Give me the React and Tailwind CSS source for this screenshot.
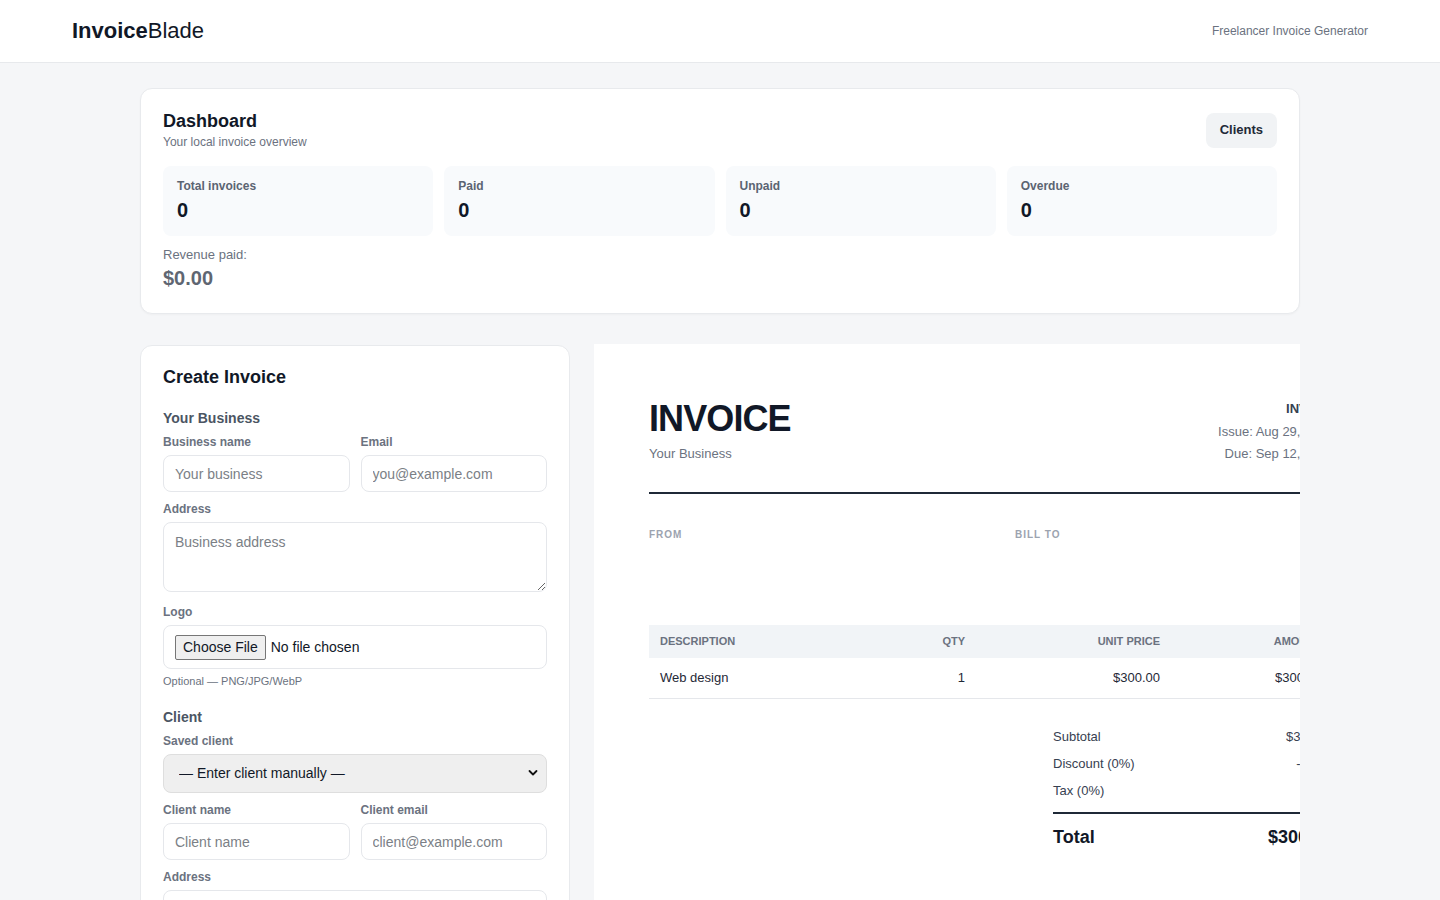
import React from "react";

function Field({ label, children, className = "" }) {
  return (
    <div className={className}>
      <div className="text-[12px] leading-[16px] font-bold text-[#6b7280] mb-[5px]">{label}</div>
      {children}
    </div>
  );
}

const inputCls =
  "block w-full h-[37px] rounded-lg border border-[#e5e7eb] bg-white px-[11px] text-[14px] text-[#111827] placeholder:text-[#7b7f86] outline-none";

function Stat({ label, value }) {
  return (
    <div className="rounded-lg bg-[#f8fafc] px-[14px] pt-[12px] pb-[12px]">
      <div className="text-[12px] leading-[16px] font-bold text-[#5b6472]">{label}</div>
      <div className="mt-[2px] text-[20px] leading-[28px] font-bold text-[#111827]">{value}</div>
    </div>
  );
}

export default function App() {
  return (
    <div className="min-h-screen bg-[#f5f6f8] font-['Liberation_Sans',Arial,sans-serif] text-[#111827]">
      <header className="h-[63px] bg-white border-b border-[#e7e9ec] px-[72px] flex items-center justify-between">
        <div className="text-[22px] leading-[28px] text-[#111827]">
          <span className="font-bold">Invoice</span>Blade
        </div>
        <div className="text-[12px] text-[#6b7280]">Freelancer Invoice Generator</div>
      </header>

      <main className="w-[1160px] mx-auto pt-[25px]">
        <section className="bg-white rounded-xl border border-[#e8eaed] shadow-[0_1px_2px_rgba(0,0,0,0.03)] px-[22px] pt-[20px] pb-[21px]">
          <div className="flex items-center justify-between">
            <div>
              <h1 className="text-[18px] leading-[24px] font-bold text-[#111827]">Dashboard</h1>
              <p className="mt-[1px] text-[12px] leading-[17px] text-[#6b7280]">Your local invoice overview</p>
            </div>
            <button className="h-[35px] px-[14px] rounded-lg bg-[#f1f3f5] text-[13px] font-bold text-[#1f2937]">
              Clients
            </button>
          </div>
          <div className="grid grid-cols-4 gap-[11px] mt-[15px]">
            <Stat label="Total invoices" value="0" />
            <Stat label="Paid" value="0" />
            <Stat label="Unpaid" value="0" />
            <Stat label="Overdue" value="0" />
          </div>
          <div className="mt-[10px] text-[13px] leading-[18px] text-[#6b7280]">Revenue paid:</div>
          <div className="text-[20px] leading-[28px] font-bold text-[#5f6672]">$0.00</div>
        </section>

        <div className="grid grid-cols-[430px_1fr] gap-6 mt-[30px] items-start">
          <section className="mt-[1px] bg-white rounded-xl border border-[#e8eaed] px-[22px] pt-[19px] pb-[24px]">
            <h2 className="text-[18px] leading-[24px] font-bold text-[#111827]">Create Invoice</h2>

            <h3 className="mt-[19px] text-[14px] leading-[20px] font-bold text-[#4b5563]">Your Business</h3>
            <div className="grid grid-cols-2 gap-[11px] mt-[6px]">
              <Field label="Business name">
                <input className={inputCls} placeholder="Your business" />
              </Field>
              <Field label="Email">
                <input className={inputCls} placeholder="you@example.com" />
              </Field>
            </div>
            <Field label="Address" className="mt-[9px]">
              <textarea
                className="block w-full h-[70px] rounded-lg border border-[#e5e7eb] bg-white px-[11px] py-[9px] text-[14px] leading-[20px] placeholder:text-[#7b7f86] outline-none resize-y"
                placeholder="Business address"
              />
            </Field>
            <Field label="Logo" className="mt-[12px]">
              <div className="h-[44px] rounded-lg border border-[#e5e7eb] bg-white px-[11px] flex items-center">
                <input
                  type="file"
                  className="text-[14px] text-[#111827] file:mr-[5px] file:border file:border-[#767676] file:bg-[#efefef] file:rounded-[2px] file:px-[7px] file:py-[1px] file:text-[14px] file:text-[#111827]"
                />
              </div>
            </Field>
            <div className="mt-[5px] text-[11px] leading-[14px] text-[#6b7280]">Optional — PNG/JPG/WebP</div>

            <h3 className="mt-[19px] text-[14px] leading-[20px] font-bold text-[#4b5563]">Client</h3>
            <Field label="Saved client" className="mt-[6px]">
              <div className="relative">
                <select className="block w-full h-[39px] appearance-none rounded-lg border border-[#dedede] bg-[#efefef] pl-[15px] pr-[30px] text-[14px] text-[#111827] outline-none">
                  <option>— Enter client manually —</option>
                </select>
                <svg
                  className="absolute right-[9px] top-[15px] pointer-events-none"
                  width="10"
                  height="8"
                  viewBox="0 0 10 8"
                  fill="none"
                >
                  <path d="M1.5 2 L5 5.5 L8.5 2" stroke="#111" strokeWidth="1.8" strokeLinecap="round" strokeLinejoin="round" />
                </svg>
              </div>
            </Field>
            <div className="grid grid-cols-2 gap-[11px] mt-[9px]">
              <Field label="Client name">
                <input className={inputCls} placeholder="Client name" />
              </Field>
              <Field label="Client email">
                <input className={inputCls} placeholder="client@example.com" />
              </Field>
            </div>
            <Field label="Address" className="mt-[9px]">
              <textarea
                className="block w-full h-[70px] rounded-lg border border-[#e5e7eb] bg-white px-[11px] py-[9px] text-[14px] leading-[20px] placeholder:text-[#7b7f86] outline-none resize-y"
                placeholder="Client address"
              />
            </Field>
          </section>

          <div className="overflow-hidden">
            <div className="w-[794px] min-h-[1000px] bg-white shadow-[0_1px_3px_rgba(0,0,0,0.05)] px-[55px] pt-[57px] pb-[56px]">
              <div className="flex items-start justify-between border-b-2 border-[#1f2937] pb-[27px]">
                <div>
                  <div className="text-[36px] leading-[36px] font-bold tracking-tight text-[#111827]">INVOICE</div>
                  <div className="mt-[8px] text-[13px] leading-[18px] text-[#6b7280]">Your Business</div>
                </div>
                <div className="text-right">
                  <div className="text-[13px] leading-[16px] font-bold text-[#374151]">INV-001</div>
                  <div className="mt-[4px] text-[13px] leading-[22px] text-[#6b7280]">Issue: Aug 29, 2025</div>
                  <div className="text-[13px] leading-[22px] text-[#6b7280]">Due: Sep 12, 2025</div>
                </div>
              </div>

              <div className="grid grid-cols-2 gap-12 mt-[34px]">
                <div className="text-[10px] leading-[14px] font-bold tracking-[0.1em] text-[#9ca3af]">FROM</div>
                <div className="text-[10px] leading-[14px] font-bold tracking-[0.1em] text-[#9ca3af]">BILL TO</div>
              </div>

              <table className="w-full mt-[83px] border-collapse table-fixed">
                <colgroup>
                  <col className="w-[247px]" />
                  <col className="w-[80px]" />
                  <col className="w-[195px]" />
                  <col className="w-[162px]" />
                </colgroup>
                <thead>
                  <tr className="bg-[#f1f4f7]">
                    <th className="h-[33px] px-[11px] text-left text-[11px] font-bold text-[#6b7280]">DESCRIPTION</th>
                    <th className="h-[33px] px-[11px] text-right text-[11px] font-bold text-[#6b7280]">QTY</th>
                    <th className="h-[33px] px-[11px] text-right text-[11px] font-bold text-[#6b7280]">UNIT PRICE</th>
                    <th className="h-[33px] px-[11px] text-right text-[11px] font-bold text-[#6b7280]">AMOUNT</th>
                  </tr>
                </thead>
                <tbody>
                  <tr className="border-b border-[#e5e7eb]">
                    <td className="h-[40px] px-[11px] text-[13px] text-[#1f2937]">Web design</td>
                    <td className="h-[40px] px-[11px] text-right text-[13px] text-[#1f2937]">1</td>
                    <td className="h-[40px] px-[11px] text-right text-[13px] text-[#1f2937]">$300.00</td>
                    <td className="h-[40px] px-[11px] text-right text-[13px] text-[#1f2937]">$300.00</td>
                  </tr>
                </tbody>
              </table>

              <div className="ml-auto w-[280px] mt-[25px]">
                <div className="h-[27px] flex items-center justify-between text-[13px] text-[#374151]">
                  <span>Subtotal</span>
                  <span>$300.00</span>
                </div>
                <div className="h-[27px] flex items-center justify-between text-[13px] text-[#374151]">
                  <span>Discount (0%)</span>
                  <span>-$0.00</span>
                </div>
                <div className="h-[27px] flex items-center justify-between text-[13px] text-[#374151]">
                  <span>Tax (0%)</span>
                  <span>$0.00</span>
                </div>
                <div className="mt-[7px] border-t-2 border-[#1f2937] pt-[9px] flex items-center justify-between text-[18px] leading-[28px] font-bold text-[#111827]">
                  <span>Total</span>
                  <span>$300.00</span>
                </div>
              </div>
            </div>
          </div>
        </div>
      </main>
    </div>
  );
}
